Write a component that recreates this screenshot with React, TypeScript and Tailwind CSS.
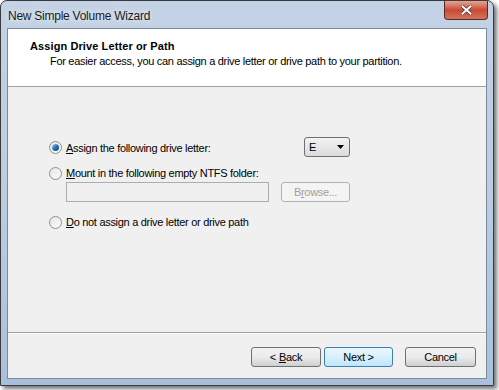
import React from "react";

const font = { fontFamily: '"Liberation Sans", Arial, sans-serif' };

const Radio: React.FC<{ checked?: boolean }> = ({ checked }) => (
  <span className="flex h-[13px] w-[13px] shrink-0 items-center justify-center rounded-full border border-[#8e8f8f] bg-gradient-to-br from-[#e6e6e6] to-[#fbfbfb]">
    {checked && (
      <span className="h-[7px] w-[7px] rounded-full bg-gradient-to-br from-[#a6cff0] via-[#2a6fb8] to-[#0d3f7e]" />
    )}
  </span>
);

const WinButton: React.FC<{ children: React.ReactNode; primary?: boolean; disabled?: boolean; className?: string }> = ({
  children,
  primary,
  disabled,
  className = "",
}) => (
  <div
    className={
      "flex h-[20px] items-center justify-center rounded-[3px] border text-[11px] " +
      (disabled
        ? "border-[#adb2b5] bg-[#f4f4f4] text-[#a0a0a0] "
        : primary
        ? "border-[#3c7fb1] bg-gradient-to-b from-[#eaf6fd] via-[#d9f0fc] to-[#bee6fd] text-black "
        : "border-[#707070] bg-gradient-to-b from-[#f2f2f2] via-[#ebebeb] to-[#cfcfcf] text-black ") +
      className
    }
  >
    {children}
  </div>
);

export default function App() {
  return (
    <div className="h-[390px] w-[499px] bg-white" style={font}>
      <div className="flex h-[386px] w-[494px] flex-col rounded-t-[7px] border border-[#3a3a3a] bg-gradient-to-b from-[#c3d2e4] via-[#bccde2] to-[#a9c0dc] shadow-[3px_3px_4px_rgba(0,0,0,0.55)]">
        {/* title bar */}
        <div className="flex h-[27px] items-start justify-between pl-[7px] pr-[5px]">
          <span className="mt-[8px] text-[12px] leading-[14px] tracking-[-0.25px] text-[#1a1a1a] [text-shadow:0_0_6px_#ffffff]">
            New Simple Volume Wizard
          </span>
          <div className="flex h-[19px] w-[44px] items-center justify-center rounded-b-[4px] border border-t-0 border-[#5a2a24] bg-gradient-to-b from-[#e5a494] via-[#c74a36] to-[#d3735c]">
            <svg width="11" height="10" viewBox="0 0 11 10">
              <path d="M1.5 1.5 L9.5 8.5 M9.5 1.5 L1.5 8.5" stroke="#3b3b3b" strokeWidth="3.4" strokeLinecap="square" />
              <path d="M1.5 1.5 L9.5 8.5 M9.5 1.5 L1.5 8.5" stroke="#ffffff" strokeWidth="2" strokeLinecap="square" />
            </svg>
          </div>
        </div>

        {/* client */}
        <div className="mx-[6px] flex flex-1 flex-col border border-[#7a8a9f] bg-[#f0f0f0] text-[11px] tracking-[-0.3px] text-black">
          <div className="h-[58px] border-b border-[#a0a0a0] bg-white pl-[22px] pt-[11px]">
            <div className="text-[11px] font-bold leading-[13px] tracking-[0.1px]">Assign Drive Letter or Path</div>
            <div className="pl-[20px] pt-[2px] leading-[13px]">
              For easier access, you can assign a drive letter or drive path to your partition.
            </div>
          </div>

          <div className="flex flex-1 flex-col border-b border-[#a0a0a0] pl-[41px] pt-[50px]">
            <div className="flex h-[20px] items-center">
              <Radio checked />
              <span className="ml-[4px] w-[238px] pt-[2px]">
                <u>A</u>ssign the following drive letter:
              </span>
              <div className="flex h-[20px] w-[46px] items-center justify-between rounded-[3px] border border-[#707070] bg-gradient-to-b from-[#f2f2f2] to-[#dcdcdc] pl-[4px] pr-[5px]">
                <span>E</span>
                <svg width="7" height="4" viewBox="0 0 7 4">
                  <path d="M0 0 H7 L3.5 4 Z" fill="#000" />
                </svg>
              </div>
            </div>
            <div className="mt-[9px] flex h-[14px] items-center">
              <Radio />
              <span className="ml-[4px]">
                <u>M</u>ount in the following empty NTFS folder:
              </span>
            </div>
            <div className="mt-[2px] flex items-center pl-[17px]">
              <div className="h-[20px] w-[203px] border border-[#abadb3] bg-[#f0f0f0]" />
              <WinButton disabled className="ml-[12px] w-[69px]">
                B<u>r</u>owse...
              </WinButton>
            </div>
            <div className="mt-[13px] flex h-[14px] items-center">
              <Radio />
              <span className="ml-[4px]">
                <u>D</u>o not assign a drive letter or drive path
              </span>
            </div>
          </div>

          <div className="flex h-[45px] items-start justify-end border-t border-white pr-[10px] pt-[13px]">
            <WinButton className="w-[70px]">
              &lt; <u className="ml-[3px]">B</u>ack
            </WinButton>
            <WinButton primary className="ml-[3px] w-[69px]">
              Next &gt;
            </WinButton>
            <WinButton className="ml-[12px] w-[71px]">Cancel</WinButton>
          </div>
        </div>
        <div className="h-[6px]" />
      </div>
    </div>
  );
}
